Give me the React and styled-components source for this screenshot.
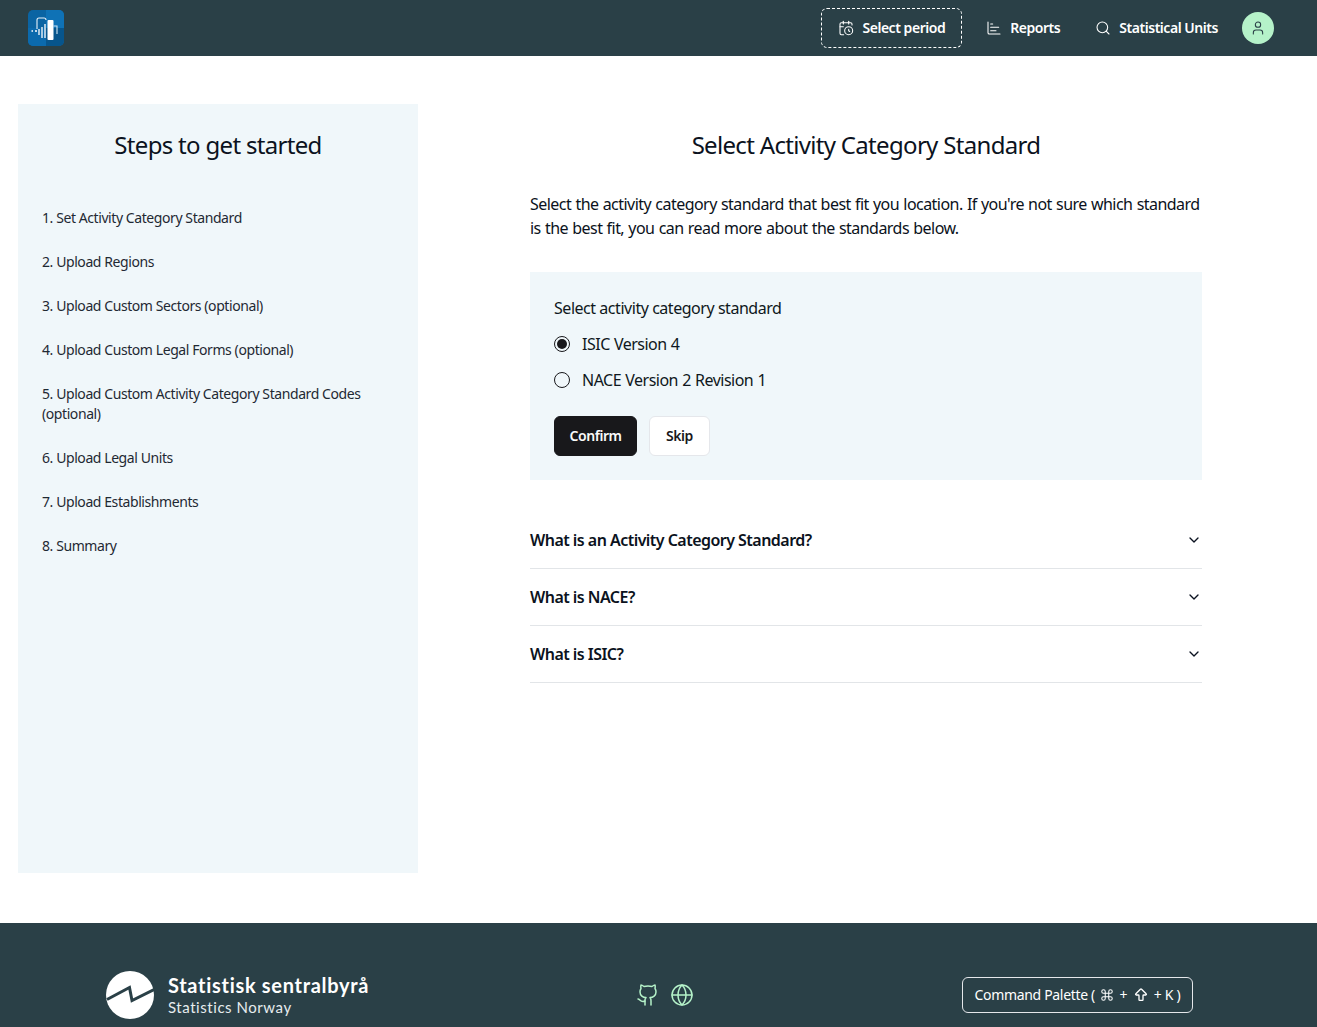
import React from "react";
import styled, { createGlobalStyle } from "styled-components";
import { CalendarClock, ChartBar, Search, User, Github, Globe, ChevronDown, Command, ArrowBigUp } from "lucide-react";

const Global = createGlobalStyle`
  * { box-sizing: border-box; }
  html, body { margin: 0; padding: 0; background: #fff; }
  body { font-family: "Noto Sans", "Open Sans", sans-serif; color: #0f1720; }
`;
const Page = styled.div`display: flex; flex-direction: column; min-height: 1027px; overflow: hidden;`;
const Header = styled.header`
  height: 56px; background: #2a4047; display: flex; align-items: center; justify-content: space-between;
  padding: 0 43px 0 28px; flex: none;
`;
const Nav = styled.nav`display: flex; align-items: center; gap: 1px;`;
const NavLabel = styled.span`position: relative; top: -1px;`;
const NavItem = styled.a`
  display: flex; align-items: center; gap: 8px; height: 40px; padding: 0 16px;
  margin-right: ${p => (p.$dashed ? "6px" : "0")};
  color: #fff; font-size: 14px; font-weight: 600; letter-spacing: -0.46px; border-radius: 6px;
  border: ${p => (p.$dashed ? "1px dashed #fff" : "1px solid transparent")};
`;
const Avatar = styled.div`
  width: 32px; height: 32px; border-radius: 50%; background: #b5f2c9; color: #2a4047; margin-left: 6px;
  display: flex; align-items: center; justify-content: center;
`;
const Main = styled.main`
  flex: 1; display: grid; grid-template-columns: 400px 672px; column-gap: 112px; padding: 48px 18px 50px;
`;
const Side = styled.aside`background: #f0f7fa; height: 769px; padding: 25px 24px 24px;`;
const Title = styled.h2`
  margin: 0; font-size: 24px; line-height: 32px; font-weight: 400; text-align: center; letter-spacing: -0.68px; color: #0b1220;
`;
const Steps = styled.ol`list-style: none; margin: 47px 0 0; padding: 0; display: flex; flex-direction: column; gap: 24px;`;
const Step = styled.li`font-size: 14px; line-height: 20px; letter-spacing: -0.42px; color: #1f2933;`;
const Content = styled.section`padding-top: 25px;`;
const Intro = styled.p`margin: 31px 0 32px; font-size: 16px; line-height: 24px; letter-spacing: -0.54px; word-spacing: 0.6px; color: #0b1220;`;
const Card = styled.div`background: #f0f7fa; padding: 24px; height: 208px;`;
const Legend = styled.div`font-size: 16px; line-height: 24px; letter-spacing: -0.46px; margin-bottom: 12px;`;
const Radios = styled.div`display: flex; flex-direction: column; gap: 12px;`;
const RadioRow = styled.label`display: flex; align-items: center; gap: 12px; font-size: 16px; line-height: 24px; letter-spacing: -0.5px; word-spacing: 0.5px;`;
const RadioDot = styled.span`
  width: 16px; height: 16px; border-radius: 50%; border: 1px solid #18181b; display: flex; align-items: center; justify-content: center;
  &::after { content: ""; width: 10px; height: 10px; border-radius: 50%; background: ${p => (p.$on ? "#18181b" : "transparent")}; }
`;
const Buttons = styled.div`display: flex; gap: 12px; margin-top: 24px;`;
const Button = styled.button`
  height: 40px; padding: 0 ${p => (p.$primary ? "14.5px" : "16px")} 2px; border-radius: 6px; font: 600 14px "Noto Sans", sans-serif; letter-spacing: -0.45px;
  background: ${p => (p.$primary ? "#18181b" : "#fff")}; color: ${p => (p.$primary ? "#fafafa" : "#18181b")};
  border: 1px solid ${p => (p.$primary ? "#18181b" : "#e5e7eb")};
`;
const Accordion = styled.div`margin-top: 32px;`;
const AccRow = styled.div`
  height: 57px; border-bottom: 1px solid #e2e5e8; display: flex; align-items: center; justify-content: space-between;
  font-size: 16px; font-weight: 600; letter-spacing: -0.53px; color: #0b1220;
`;
const Footer = styled.footer`
  flex: none; height: 104px; background: #2a4047; display: flex; align-items: flex-start; justify-content: space-between;
  padding: 48px 124px 0 106px;
`;
const Brand = styled.div`display: flex; align-items: center; gap: 14px; color: #fff;`;
const BrandText = styled.div`display: flex; flex-direction: column;`;
const BrandName = styled.div`font-family: Lato, sans-serif; font-size: 20px; line-height: 24px; font-weight: 700; letter-spacing: 0.7px;`;
const BrandSub = styled.div`font-family: Lato, sans-serif; font-size: 15px; line-height: 21px; letter-spacing: 0.55px; color: #e6ecee;`;
const Links = styled.div`display: flex; gap: 10px; color: #b5f2c9; margin: 12px 0 0 -1px;`;
const Palette = styled.div`
  height: 36px; width: 231px; border: 1px solid #e5e7eb; border-radius: 6px; color: #fff; margin-top: 6px; padding-bottom: 1px;
  display: flex; align-items: center; justify-content: center; gap: 2px; font-size: 14px; letter-spacing: -0.33px; white-space: pre;
`;

const steps = [
  "1. Set Activity Category Standard", "2. Upload Regions", "3. Upload Custom Sectors (optional)",
  "4. Upload Custom Legal Forms (optional)", "5. Upload Custom Activity Category Standard Codes (optional)",
  "6. Upload Legal Units", "7. Upload Establishments", "8. Summary",
];

const Logo = () => (
  <svg width="36" height="36" viewBox="0 0 36 36">
    <clipPath id="lc"><rect width="36" height="36" rx="5" /></clipPath>
    <g clipPath="url(#lc)">
      <rect width="36" height="36" fill="#0a64a3" />
      <rect x="18" width="18" height="18" fill="#0f72b6" />
      <rect x="18" y="18" width="18" height="18" fill="#07558c" />
      <rect y="18" width="18" height="18" fill="#0b6aad" />
    </g>
    <path d="M9 19V10a2 2 0 0 1 2-2h5a2 2 0 0 1 2 2" fill="none" stroke="#e8f2fa" strokeWidth="1.1" />
    <rect x="19.5" y="10" width="6" height="20" rx="1" fill="#fff" />
    <path d="M25.5 16h3.5v8" fill="none" stroke="#cfe4f3" strokeWidth="1.1" />
    <path d="M17 14v14M14 17v11M11 19v6M7 21h2M3.5 21h1.5" stroke="#fff" strokeWidth="1.3" fill="none" />
  </svg>
);

const SsbLogo = () => (
  <svg width="48" height="48" viewBox="0 0 48 48">
    <circle cx="24" cy="24" r="24" fill="#fff" />
    <path d="M1 28.5 L23.5 16.5 L26 29.5 L48 18.5" fill="none" stroke="#2a4047" strokeWidth="3" />
  </svg>
);

export default function App() {
  return (
    <Page>
      <Global />
      <Header>
        <Logo />
        <Nav>
          <NavItem $dashed><CalendarClock size={16} strokeWidth={1.6} /><NavLabel>Select period</NavLabel></NavItem>
          <NavItem><ChartBar size={16} strokeWidth={1.6} /><NavLabel>Reports</NavLabel></NavItem>
          <NavItem><Search size={16} strokeWidth={1.6} /><NavLabel>Statistical Units</NavLabel></NavItem>
          <Avatar><User size={16} strokeWidth={1.6} /></Avatar>
        </Nav>
      </Header>
      <Main>
        <Side>
          <Title>Steps to get started</Title>
          <Steps>{steps.map(s => <Step key={s}>{s}</Step>)}</Steps>
        </Side>
        <Content>
          <Title>Select Activity Category Standard</Title>
          <Intro>Select the activity category standard that best fit you location. If you're not sure which standard is the best fit, you can read more about the standards below.</Intro>
          <Card>
            <Legend>Select activity category standard</Legend>
            <Radios>
              <RadioRow><RadioDot $on />ISIC Version 4</RadioRow>
              <RadioRow><RadioDot />NACE Version 2 Revision 1</RadioRow>
            </Radios>
            <Buttons>
              <Button $primary>Confirm</Button>
              <Button>Skip</Button>
            </Buttons>
          </Card>
          <Accordion>
            {["What is an Activity Category Standard?", "What is NACE?", "What is ISIC?"].map(q => (
              <AccRow key={q}>{q}<ChevronDown size={16} /></AccRow>
            ))}
          </Accordion>
        </Content>
      </Main>
      <Footer>
        <Brand>
          <SsbLogo />
          <BrandText>
            <BrandName>Statistisk sentralbyrå</BrandName>
            <BrandSub>Statistics Norway</BrandSub>
          </BrandText>
        </Brand>
        <Links>
          <Github size={24} strokeWidth={1.5} />
          <Globe size={24} strokeWidth={1.5} />
        </Links>
        <Palette>Command Palette ( <Command size={14} strokeWidth={1.8} /> + <ArrowBigUp size={16} strokeWidth={2} /> + K )</Palette>
      </Footer>
    </Page>
  );
}
